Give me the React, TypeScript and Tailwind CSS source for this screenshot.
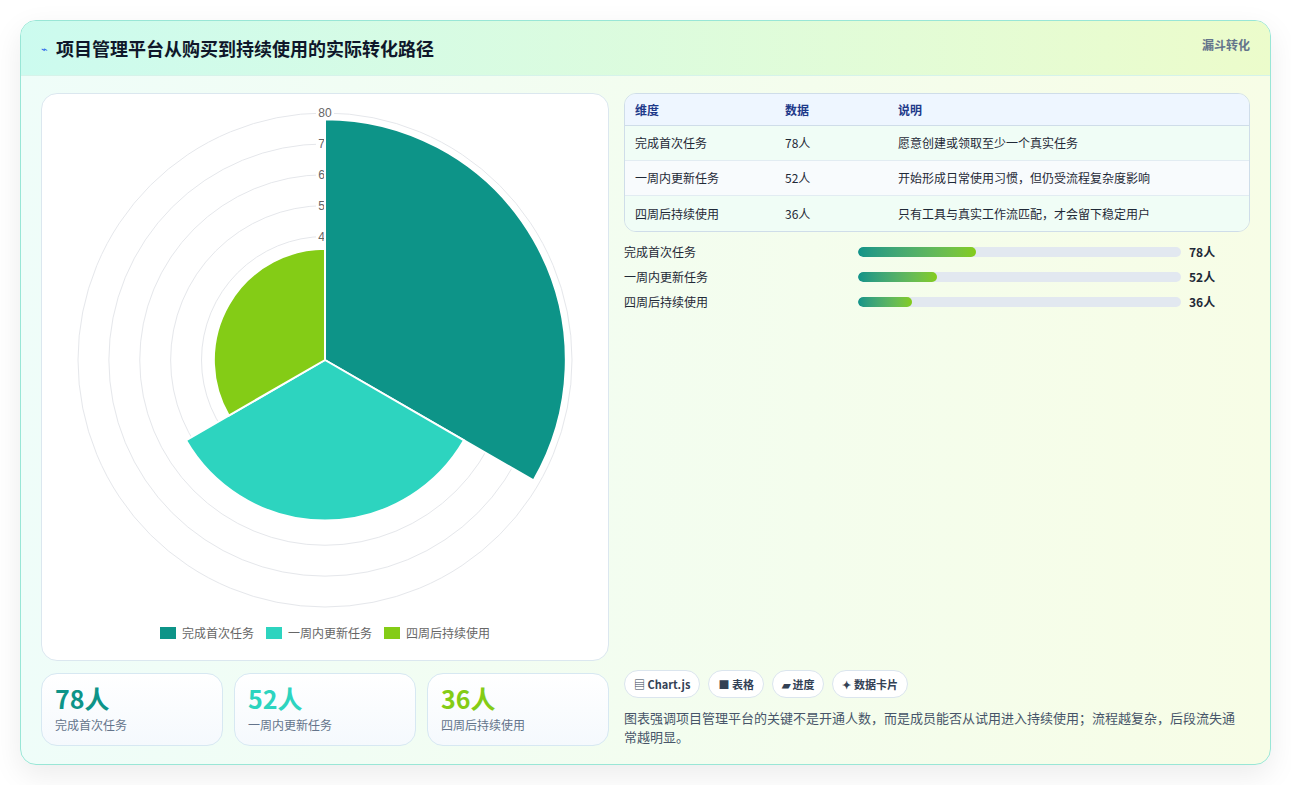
import React from 'react';

const items = [
  { name: '完成首次任务', value: 78, color: '#0d9488', note: '愿意创建或领取至少一个真实任务' },
  { name: '一周内更新任务', value: 52, color: '#2dd4bf', note: '开始形成日常使用习惯，但仍受流程复杂度影响' },
  { name: '四周后持续使用', value: 36, color: '#84cc16', note: '只有工具与真实工作流匹配，才会留下稳定用户' },
];

const CX = 283;
const CY = 266;
const K = 247 / 80;

function wedge(r: number, a0: number, a1: number) {
  const rad = (d: number) => ((d - 90) * Math.PI) / 180;
  const x0 = CX + r * Math.cos(rad(a0));
  const y0 = CY + r * Math.sin(rad(a0));
  const x1 = CX + r * Math.cos(rad(a1));
  const y1 = CY + r * Math.sin(rad(a1));
  return `M${CX},${CY} L${x0},${y0} A${r},${r} 0 0 1 ${x1},${y1} Z`;
}

function PolarChart() {
  const ticks = [10, 20, 30, 40, 50, 60, 70, 80];
  return (
    <svg width="566" height="530" className="block">
      {ticks.map((t) => (
        <circle key={t} cx={CX} cy={CY} r={t * K} fill="none" stroke="#e5e7eb" strokeWidth="1" />
      ))}
      {ticks.map((t) => (
        <g key={'l' + t}>
          <rect x={CX - 9} y={CY - t * K - 7} width="18" height="13" fill="white" />
          <text x={CX} y={CY - t * K + 4} textAnchor="middle" fontSize="12" fill="#666" fontFamily="Liberation Sans, sans-serif">
            {t}
          </text>
        </g>
      ))}
      {items.map((it, i) => (
        <path key={it.name} d={wedge(it.value * K, i * 120, i * 120 + 120)} fill={it.color} stroke="white" strokeWidth="2" />
      ))}
    </svg>
  );
}

export default function App() {
  const font = { fontFamily: '"Noto Sans CJK SC", "Noto Sans", sans-serif' };
  return (
    <div className="min-h-screen bg-white" style={font}>
      <div className="p-5 pb-5">
        <div className="rounded-2xl border border-[#99e6d6] bg-gradient-to-r from-[#effdf9] to-[#f7fde6] shadow-[0_10px_30px_rgba(0,0,0,0.08)] overflow-hidden">
          <div className="h-[55px] flex items-center justify-between px-5 bg-gradient-to-r from-[#ccfbef] to-[#ecfccb] border-b border-[#d6f3ea]">
            <div className="flex items-center gap-2">
              <span className="text-[#2563eb] text-[11px]">⌁</span>
              <h1 className="text-[18px] font-bold text-[#0f172a]">项目管理平台从购买到持续使用的实际转化路径</h1>
            </div>
            <span className="text-[12px] font-bold text-[#64748b] self-start mt-[15px]">漏斗转化</span>
          </div>
          <div className="flex gap-[15px] px-5 pt-[17px] pb-[18px]">
            <div className="w-[568px] flex flex-col gap-3">
              <div className="h-[568px] rounded-2xl border border-[#dbe7ef] bg-white relative">
                <PolarChart />
                <div className="absolute left-0 right-0 top-[530px] flex justify-center gap-3 text-[12px] text-[#666]">
                  {items.map((it) => (
                    <div key={it.name} className="flex items-center gap-1.5">
                      <span className="w-4 h-3" style={{ background: it.color }} />
                      {it.name}
                    </div>
                  ))}
                </div>
              </div>
              <div className="grid grid-cols-3 gap-[11px]">
                {items.map((it) => (
                  <div key={it.name} className="h-[73px] rounded-2xl border border-[#d7e8f2] bg-gradient-to-b from-white to-[#f5f9fd] px-[13px] pt-[8px]">
                    <div className="text-[25px] font-bold leading-[32px]" style={{ color: it.color }}>{it.value}人</div>
                    <div className="text-[12px] text-[#64748b] mt-[2px]">{it.name}</div>
                  </div>
                ))}
              </div>
            </div>
            <div className="flex-1 flex flex-col">
              <div className="rounded-xl border border-[#cfdde9] overflow-hidden text-[12px]">
                <div className="flex h-[32px] items-center bg-[#eef6ff] border-b border-[#cfdde9] font-bold text-[#1e3a8a] px-[10px]">
                  <span className="w-[150px]">维度</span>
                  <span className="w-[113px]">数据</span>
                  <span>说明</span>
                </div>
                {items.map((it, i) => (
                  <div key={it.name} className={`flex h-[35px] items-center px-[10px] text-[#1f2937] ${i === 1 ? 'bg-[#f8fbfd]' : 'bg-[#f0fdf6]'} ${i < 2 ? 'border-b border-[#e2ecf2]' : ''}`}>
                    <span className="w-[150px]">{it.name}</span>
                    <span className="w-[113px]">{it.value}人</span>
                    <span>{it.note}</span>
                  </div>
                ))}
              </div>
              <div className="flex flex-col gap-[8px] mt-[11px]">
                {items.map((it) => (
                  <div key={it.name} className="flex items-center h-[17px] text-[12px] text-[#1f2937]">
                    <span className="w-[234px]">{it.name}</span>
                    <div className="w-[323px] h-[10px] rounded-full bg-[#e2e8f0] overflow-hidden">
                      <div className="h-full rounded-full bg-gradient-to-r from-[#0f9488] to-[#84cc16]" style={{ width: `${(it.value / 78) * 36.5}%` }} />
                    </div>
                    <span className="ml-2 font-bold">{it.value}人</span>
                  </div>
                ))}
              </div>
              <div className="flex-1" />
              <div className="flex gap-[8px] text-[11px] font-bold text-[#334155]">
                {['▤ Chart.js', '■ 表格', '▰ 进度', '✦ 数据卡片'].map((c) => (
                  <span key={c} className="h-[28px] px-[9px] flex items-center rounded-full border border-[#dbe5ee] bg-white">{c}</span>
                ))}
              </div>
              <p className="mt-[10px] text-[13px] leading-[19px] text-[#475569] pr-1">
                图表强调项目管理平台的关键不是开通人数，而是成员能否从试用进入持续使用；流程越复杂，后段流失通常越明显。
              </p>
            </div>
          </div>
        </div>
      </div>
    </div>
  );
}
